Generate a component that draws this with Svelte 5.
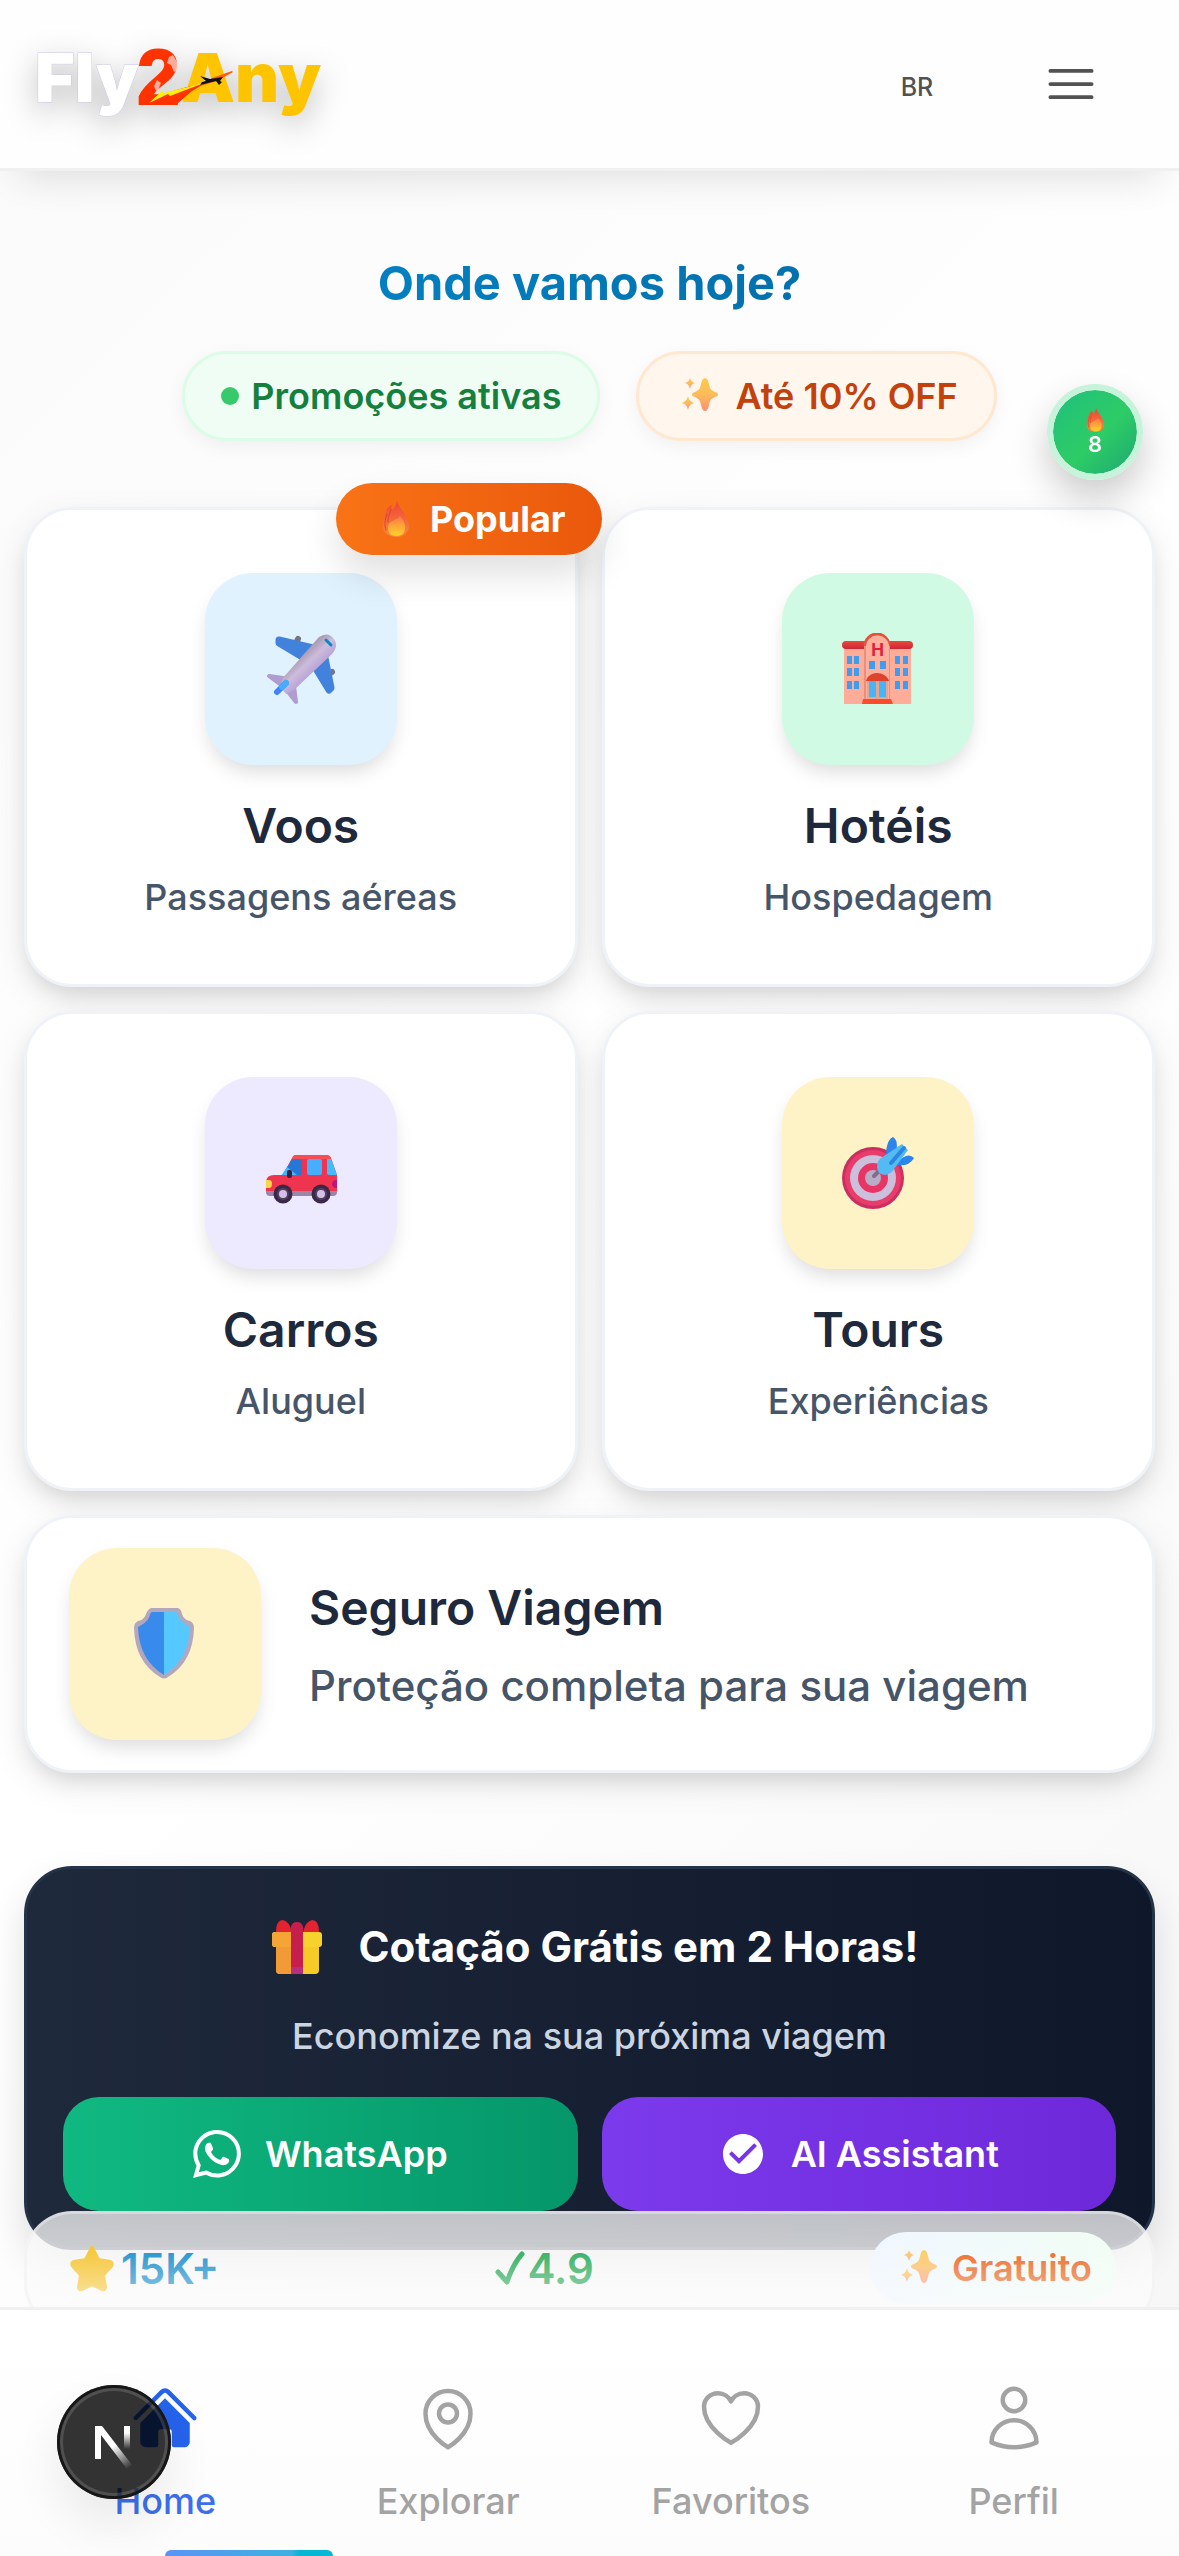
<script>
  const services = [
    { id: 'plane', title: 'Voos', text: 'Passagens aéreas', tone: 'sky', popular: true },
    { id: 'hotel', title: 'Hotéis', text: 'Hospedagem', tone: 'mint' },
    { id: 'car', title: 'Carros', text: 'Aluguel', tone: 'violet' },
    { id: 'target', title: 'Tours', text: 'Experiências', tone: 'amber' }
  ];

  const tabs = [
    { label: 'Home', active: true },
    {
      label: 'Explorar',
      paths: [
        'M15 10.5a3 3 0 11-6 0 3 3 0 016 0z',
        'M19.5 10.5c0 7.142-7.5 11.25-7.5 11.25S4.5 17.642 4.5 10.5a7.5 7.5 0 1115 0z'
      ]
    },
    {
      label: 'Favoritos',
      paths: [
        'M21 8.25c0-2.485-2.099-4.5-4.688-4.5-1.935 0-3.597 1.126-4.312 2.733-.715-1.607-2.377-2.733-4.313-2.733C5.1 3.75 3 5.765 3 8.25c0 7.22 9 12 9 12s9-4.78 9-12z'
      ]
    },
    {
      label: 'Perfil',
      paths: [
        'M15.75 6a3.75 3.75 0 11-7.5 0 3.75 3.75 0 017.5 0z',
        'M4.501 20.118a7.5 7.5 0 0114.998 0A17.933 17.933 0 0112 21.75c-2.676 0-5.216-.584-7.499-1.632z'
      ]
    }
  ];

  const windowRows = [23, 35, 48];
  const windowCols = [5, 12, 53, 61];
</script>

{#snippet fire()}
  <svg class="fire" viewBox="0 0 28 36" aria-hidden="true">
    <path d="M15 0c1 5 5 8 8 14 2 4 4 7 4 12-1 6-6 10-12 10C7 36 1 32 1 25c-1-7 2-10 3-15 1-3 4-6 6-6-1 3-1 4 0 5 3-2 4-5 5-9z" fill="url(#flame)" />
    <path d="M5 13c-2 6-3 11-1 16M9 8c0 4-4 8-3 13" fill="none" stroke="#d9482b" stroke-width="1" stroke-linecap="round" />
    <path d="M18 15c3 4 6 8 5 13-1 5-4 7-9 7-6 0-8-4-8-8 0-5 3-6 6-8 3-1 5-2 6-4z" fill="url(#ember)" />
  </svg>
{/snippet}

{#snippet sparkles()}
  <svg class="sparkles" viewBox="0 0 48 36" aria-hidden="true">
    <g fill="url(#spark)">
      <path d="M30 0c2 0 3 2 4 6 1 5 2 6 6 8 4 1 4 4 0 5-4 2-5 3-6 8-1 4-2 6-4 6s-3-2-4-6c-1-5-2-6-6-8-4-1-4-4 0-5 4-2 5-3 6-8 1-4 2-6 4-6z" />
      <path d="M15 0c1 3 2 4 5 5-3 1-4 2-5 6-1-4-2-5-5-6 3-1 4-2 5-5z" />
      <path d="M13 18c1 4 2 5 6 7-4 1-5 3-6 7-1-4-2-6-6-7 4-2 5-3 6-7z" />
    </g>
  </svg>
{/snippet}

{#snippet art(id)}
  <svg class="art" viewBox="0 0 72 72" aria-hidden="true">
    {#if id === 'plane'}
      <g stroke="#777482" stroke-width="6" stroke-linecap="round"><path d="M32 8l1-2M64 41l3-2" /></g>
      <g fill="#4183dc" stroke="#4183dc" stroke-width="7" stroke-linejoin="round">
        <path d="M14 7l34 8-9 10-25-15z" />
        <path d="M64 57l-14-23 10-9 6 30z" />
      </g>
      <path d="M4 43l14 2 6 9-4 1zM24 54l5-1 2 16-11-14z" fill="#b29bd0" stroke="#b29bd0" stroke-width="4" stroke-linejoin="round" />
      <path d="M17 56V46L54 4q9-6 15 2 5 7-2 15L29 57l-8 4z" fill="url(#fuselage)" />
      <path d="M21 50l-9 9" stroke="#4281ff" stroke-width="6" stroke-linecap="round" />
      <path d="M21 50l-4 4" stroke="#47adfa" stroke-width="6" stroke-linecap="round" />
      <path d="M61 7l5 5" stroke="#078ac6" stroke-width="3" stroke-linecap="round" />
    {:else if id === 'hotel'}
      <rect x="2" y="12" width="67" height="59" fill="#ffad98" />
      <rect x="0" y="8" width="71" height="8" rx="4" fill="url(#roof)" />
      <path d="M22 71V13a13 13 0 0126 0v58z" fill="#e88f80" />
      <path d="M23 13a12 12 0 0124 0" fill="none" stroke="#e4523b" stroke-width="3" />
      <path d="M24 71V14a11 11 0 0123 0v57z" fill="#ffb09d" />
      <text x="35.5" y="23" text-anchor="middle" class="hotel-letter">H</text>
      <g fill="#3f9df0">
        {#each windowRows as y}
          {#each windowCols as x}<rect {x} {y} width="5" height="8" />{/each}
        {/each}
        <rect x="27" y="28" width="6" height="8" /><rect x="38" y="28" width="6" height="8" />
      </g>
      <rect x="25" y="48" width="21" height="19" fill="#e6a68b" />
      <g fill="#45b4fb"><rect x="27" y="48" width="7" height="16" /><rect x="37" y="48" width="7" height="16" /></g>
      <path d="M24 48c1-5 6-8 11-8s11 3 12 8z" fill="#de432b" />
      <path d="M20 71l1-5h28l2 5z" fill="#fb4b2c" />
    {:else if id === 'car'}
      <path d="M1 44q1-6 8-6h9l9-17q2-3 5-3h29q4 0 5 3l6 17v17H1z" fill="#ee344f" />
      <path d="M30 18h31q4 0 5 4H27q1-4 3-4z" fill="#f94b54" />
      <path d="M1 54h71v1q0 4-4 4H5q-4 0-4-4z" fill="#9b86a8" />
      <path d="M17 38l9-14q1-2 3-2h6q2 0 2 2v12q0 2-2 2z" fill="#2777d7" /><path d="M17 38l5-8 10 8z" fill="#42b9fb" />
      <rect x="42" y="22" width="15" height="16" rx="2" fill="#46adff" />
      <path d="M62 22h4l6 16h-8q-2 0-2-2z" fill="#43bbff" />
      <rect x="22" y="33" width="5" height="8" rx="2" fill="#382348" />
      <path d="M1 43h3q3 0 3 4t-3 4H1z" fill="#f9d647" />
      <path d="M72 43q-5 0-5 4t5 4z" fill="#bd1480" />
      {#each [18, 56] as x}
        <circle cx={x} cy="57" r="9.5" fill="#3b2849" /><circle cx={x} cy="57" r="6" fill="#53425e" /><circle cx={x} cy="57" r="4" fill="#d6bfea" />
      {/each}
    {:else if id === 'target'}
      <circle cx="31" cy="41" r="31" fill="#c92f61" />
      <circle cx="31" cy="41" r="28" fill="#e93c6a" />
      <circle cx="31" cy="41" r="23" fill="#cbbfdc" />
      <circle cx="31" cy="41" r="15" fill="#e93566" />
      <circle cx="31" cy="41" r="8" fill="#b9acc5" />
      <path d="M32 39l7-7" stroke="#806d8c" stroke-width="4" stroke-linecap="round" />
      <path d="M44 16q1-14 7-16 4 2 4 10l-4 10zM54 26q12-12 18-5-5 9-18 7z" fill="#2c85ed" />
      <path d="M35 30q0-6 4-9L60 7l6 6-14 19q-3 5-9 6-8-1-8-8z" fill="#53baf2" />
      <path d="M49 26L62 11" stroke="#2a87e0" stroke-width="4" stroke-linecap="round" />
    {:else}
      <path d="M22 0h27q3 1 4 6 2 6 8 7 4 2 4 7-1 34-26 49-4 3-8 0Q6 54 5 20q0-5 4-7 6-1 8-7 2-5 5-6z" fill="#b3a7bd" />
      <path d="M23 4h12v63Q10 52 9 19q2-1 5-3 5-3 7-9 0-2 2-3z" fill="#388aed" />
      <path d="M47 4H35v63q25-15 26-48-2-1-5-3-5-3-7-9 0-2-2-3z" fill="#55c9ff" />
    {/if}
  </svg>
{/snippet}

<svg class="paint" width="0" height="0" aria-hidden="true">
  <defs>
    <linearGradient id="flame" x1="0" y1="0" x2="0" y2="1"><stop offset="0" stop-color="#ef4338" /><stop offset="1" stop-color="#fb8a3c" /></linearGradient>
    <linearGradient id="ember" x1="0" y1="0" x2="0" y2="1"><stop offset="0" stop-color="#ff7a45" /><stop offset="1" stop-color="#ffd22b" /></linearGradient>
    <linearGradient id="spark" x1="0" y1="0" x2="0" y2="1"><stop offset="0" stop-color="#fdc94b" /><stop offset="0.5" stop-color="#fcbc5a" /><stop offset="1" stop-color="#fa8f72" /></linearGradient>
    <linearGradient id="fuselage" gradientUnits="userSpaceOnUse" x1="35" y1="24" x2="48" y2="38"><stop offset="0" stop-color="#ac9cb4" /><stop offset="0.5" stop-color="#cdbcdc" /><stop offset="1" stop-color="#bba6d6" /></linearGradient>
    <linearGradient id="roof" x1="0" y1="0" x2="0" y2="1"><stop offset="0" stop-color="#e84a3a" /><stop offset="1" stop-color="#cf2436" /></linearGradient>
    <linearGradient id="stem" x1="0" y1="0" x2="0" y2="1"><stop offset="0.3" stop-color="#fff" /><stop offset="1" stop-color="#fff" stop-opacity="0" /></linearGradient>
    <linearGradient id="slash" gradientUnits="userSpaceOnUse" x1="58" y1="60" x2="74" y2="82"><stop offset="0" stop-color="#fff" /><stop offset="1" stop-color="#fff" stop-opacity="0" /></linearGradient>
  </defs>
</svg>

<div class="app">
  <header class="topbar">
    <a class="brand" href="#home" aria-label="Fly2Any">
      <svg viewBox="0 0 300 90">
        <g class="wordmark">
          <text x="5" y="63" fill="#fff" stroke="#c9c9e6" stroke-width="1" paint-order="stroke">Fly</text>
          <text x="151" y="63" fill="#ffc400">Any</text>
        </g>
        <text class="two" x="107" y="65" fill="#ff3300" stroke="#ff3300" stroke-width="2">2</text>
        <path d="M139 18l4-2 4 7 1 7-4 3-3-7-4-2zM127 41l4 3-4 10-3-7z" fill="#ffc9c2" opacity="0.8" />
        <path d="M112 65l20-10 25-7 17-3-12 7-15 13z" fill="#ff3300" />
        <path d="M119 64l13-12 2 2 40-10-34 13-2-2z" fill="#fff200" />
        <path d="M170 47l12-8 20-7 1 1-16 9z" fill="#ff5a00" />
        <path d="M170 37l10 3 13-2-3 4 2 1-3 3-3-4-16 4 2-3 4-1z" fill="#111" />
      </svg>
    </a>
    <div class="actions">
      <button class="lang">BR</button>
      <button class="menu" aria-label="Menu">
        <svg viewBox="0 0 24 24"><path d="M3.75 6.75h16.5M3.75 12h16.5m-16.5 5.25h16.5" /></svg>
      </button>
    </div>
  </header>

  <main>
    <h1>Onde vamos hoje?</h1>
    <div class="pills">
      <span class="pill green"><i class="dot"></i>Promoções ativas</span>
      <span class="pill orange">{@render sparkles()}Até 10% OFF</span>
    </div>

    <section class="services">
      {#each services as s}
        <button class="card">
          {#if s.popular}<span class="popular">{@render fire()}Popular</span>{/if}
          <span class="tile {s.tone}">{@render art(s.id)}</span>
          <span class="title">{s.title}</span>
          <span class="text">{s.text}</span>
        </button>
      {/each}
      <button class="card wide">
        <span class="tile amber">{@render art('shield')}</span>
        <span class="copy">
          <span class="title">Seguro Viagem</span>
          <span class="text">Proteção completa para sua viagem</span>
        </span>
      </button>
    </section>

    <section class="quote">
      <h2>
        <svg class="gift" viewBox="0 0 70 60" aria-hidden="true">
          <path d="M16 29h43v24q0 4-4 4H20q-4 0-4-4z" fill="#f6ca27" /><path d="M16 29h15v28H20q-4 0-4-4z" fill="#f19b36" />
          <rect x="12" y="15" width="50" height="15" rx="3" fill="#f7d12e" /><path d="M15 15h16v15H15q-3 0-3-3v-9q0-3 3-3z" fill="#f5a535" />
          <path d="M16 15q0-12 7-12 6 1 9 12zM59 15q0-12-7-12-6 1-9 12z" fill="#e3232f" />
          <path d="M31 57V10q1-5 6-5t6 5v47z" fill="#c71f4c" /><path d="M31 50h12v7H31z" fill="#b82f7f" />
        </svg>
        Cotação Grátis em 2 Horas!
      </h2>
      <p>Economize na sua próxima viagem</p>
      <div class="ctas">
        <button class="cta whats">
          <svg viewBox="0 0 24 24" aria-hidden="true"><path d="M17.472 14.382c-.297-.149-1.758-.867-2.03-.967-.273-.099-.471-.148-.67.15-.197.297-.767.966-.94 1.164-.173.199-.347.223-.644.075-.297-.15-1.255-.463-2.39-1.475-.883-.788-1.48-1.761-1.653-2.059-.173-.297-.018-.458.13-.606.134-.133.298-.347.446-.52.149-.174.198-.298.298-.497.099-.198.05-.371-.025-.52-.075-.149-.669-1.612-.916-2.207-.242-.579-.487-.5-.669-.51-.173-.008-.371-.01-.57-.01-.198 0-.52.074-.792.372-.272.297-1.04 1.016-1.04 2.479 0 1.462 1.065 2.875 1.213 3.074.149.198 2.096 3.2 5.077 4.487.709.306 1.262.489 1.694.625.712.227 1.36.195 1.871.118.571-.085 1.758-.719 2.006-1.413.248-.694.248-1.289.173-1.413-.074-.124-.272-.198-.57-.347m-5.421 7.403h-.004a9.87 9.87 0 01-5.031-1.378l-.361-.214-3.741.982.998-3.648-.235-.374a9.86 9.86 0 01-1.51-5.26c.001-5.45 4.436-9.884 9.888-9.884 2.64 0 5.122 1.03 6.988 2.898a9.825 9.825 0 012.893 6.994c-.003 5.45-4.437 9.884-9.885 9.884m8.413-18.297A11.815 11.815 0 0012.05 0C5.495 0 .16 5.335.157 11.892c0 2.096.547 4.142 1.588 5.945L.057 24l6.305-1.654a11.882 11.882 0 005.683 1.448h.005c6.554 0 11.89-5.335 11.893-11.893a11.821 11.821 0 00-3.48-8.413z" /></svg>
          WhatsApp
        </button>
        <button class="cta ai">
          <svg viewBox="0 0 24 24" aria-hidden="true"><path d="M12 2C6.48 2 2 6.48 2 12s4.48 10 10 10 10-4.48 10-10S17.52 2 12 2zm-2 15l-5-5 1.41-1.41L10 14.17l7.59-7.59L19 8l-9 9z" /></svg>
          AI Assistant
        </button>
      </div>
    </section>

    <section class="stats">
      <span class="stat blue">
        <svg class="star" viewBox="0 0 58 48" aria-hidden="true"><path d="M29 4l6 12 12 2q3 1 1 4l-8 9 2 12q0 3-3 2l-10-5-10 5q-3 1-3-2l2-12-8-9q-2-3 1-4l12-2z" fill="#f5bf1c" stroke="#f5bf1c" stroke-width="4" stroke-linejoin="round" /></svg>15K+
      </span>
      <span class="stat lime">
        <svg class="tick" viewBox="0 0 32 48" aria-hidden="true"><path d="M3 28l9 10Q18 20 27 10" /></svg>4.9
      </span>
      <span class="free">{@render sparkles()}Gratuito</span>
    </section>
  </main>

  <nav class="tabs">
    {#each tabs as t}
      <a href="#{t.label.toLowerCase()}" class:active={t.active}>
        {#if t.active}
          <svg class="solid" viewBox="0 0 24 24" aria-hidden="true"><path d="M11.47 3.84a.75.75 0 011.06 0l8.69 8.69a.75.75 0 101.06-1.06l-8.689-8.69a2.25 2.25 0 00-3.182 0l-8.69 8.69a.75.75 0 001.061 1.06l8.69-8.69z" /><path d="M12 5.432l8.159 8.159c.03.03.06.058.091.086v6.198c0 1.035-.84 1.875-1.875 1.875H15a.75.75 0 01-.75-.75v-4.5a.75.75 0 00-.75-.75h-3a.75.75 0 00-.75.75V21a.75.75 0 01-.75.75H5.625a1.875 1.875 0 01-1.875-1.875v-6.198a2.29 2.29 0 00.091-.086L12 5.43z" /></svg>
        {:else}
          <svg viewBox="0 0 24 24" aria-hidden="true">{#each t.paths as d}<path {d} />{/each}</svg>
        {/if}
        {t.label}
      </a>
    {/each}
  </nav>

  <button class="deals" aria-label="8 ofertas">{@render fire()}<span>8</span></button>
  <button class="devtools" aria-label="Next.js">
    <svg viewBox="0 0 114 114">
      <rect x="38" y="41" width="6" height="33" fill="#fff" />
      <path d="M38 41h7l30 39-5 4-26-34z" fill="url(#slash)" />
      <rect x="67" y="41" width="6" height="23" fill="url(#stem)" />
    </svg>
  </button>
</div>

<style>
  :global(body) {
    margin: 0;
  }

  .app,
  button {
    font-family: Inter, 'Liberation Sans', sans-serif;
  }

  .app {
    min-height: 100vh;
    display: flex;
    flex-direction: column;
    background: linear-gradient(135deg, #fafafa, #ffffff 50%, #f5f5f5);
    color: #1e293b;
  }

  button {
    margin: 0;
    padding: 0;
    border: 0;
    background: none;
    color: inherit;
    cursor: pointer;
  }

  a {
    text-decoration: none;
  }

  svg {
    display: block;
    flex: none;
  }

  .paint {
    position: absolute;
  }

  .topbar {
    position: sticky;
    top: 0;
    z-index: 5;
    box-sizing: border-box;
    height: 171px;
    padding: 0 60px 0 30px;
    display: flex;
    align-items: center;
    justify-content: space-between;
    background: #fefefe;
    border-bottom: 3px solid #f0f0f0;
    box-shadow: 0 24px 36px -18px rgba(0, 0, 0, 0.12);
  }

  .brand svg {
    width: 300px;
    height: 90px;
    overflow: visible;
    filter: drop-shadow(0 10px 15px rgba(0, 0, 0, 0.25));
  }

  .wordmark {
    font: 900 68px Inter, sans-serif;
  }

  .two {
    font: 700 77px 'Liberation Sans', sans-serif;
  }

  .actions {
    display: flex;
    align-items: center;
    gap: 58px;
    color: #525252;
  }

  .lang,
  .menu {
    width: 96px;
    height: 96px;
    display: grid;
    place-items: center;
  }

  .lang {
    padding-top: 6px;
    font-size: 25px;
    font-weight: 500;
  }

  .menu svg {
    width: 60px;
    height: 60px;
    fill: none;
    stroke: currentColor;
    stroke-width: 1.5;
    stroke-linecap: round;
  }

  main {
    display: flex;
    flex-direction: column;
    padding: 82px 24px 0;
  }

  h1 {
    margin: 0;
    font-size: 47px;
    line-height: 60px;
    font-weight: 700;
    text-align: center;
    color: transparent;
    background: linear-gradient(90deg, #0284c7 20%, #0369a1 90%);
    background-clip: text;
  }

  .pills {
    display: flex;
    justify-content: center;
    gap: 36px;
    margin-top: 38px;
  }

  .pill {
    box-sizing: border-box;
    height: 90px;
    padding: 0 36px;
    display: flex;
    align-items: center;
    gap: 12px;
    border: 3px solid;
    border-radius: 45px;
    font-size: 36px;
    font-weight: 600;
    box-shadow: 0 6px 18px rgba(0, 0, 0, 0.05);
  }

  .pill.green {
    background: #f0fdf4;
    border-color: #dcfce7;
    color: #15803d;
  }

  .pill.orange {
    background: #fff7ed;
    border-color: #ffe8cf;
    color: #c2410c;
  }

  .dot {
    width: 18px;
    height: 18px;
    border-radius: 50%;
    background: #37ca6b;
  }

  .sparkles {
    width: 48px;
    height: 36px;
  }

  .fire {
    width: 28px;
    height: 36px;
  }

  .services {
    display: grid;
    grid-template-columns: 1fr 1fr;
    gap: 24px;
    margin-top: 66px;
  }

  .card {
    position: relative;
    display: flex;
    flex-direction: column;
    align-items: center;
    padding: 63px 24px 60px;
    background: #fff;
    border: 3px solid #eff3f8;
    border-radius: 48px;
    box-shadow:
      0 12px 24px -8px rgba(0, 0, 0, 0.14),
      0 12px 36px rgba(0, 0, 0, 0.08);
  }

  .tile {
    width: 192px;
    height: 192px;
    display: grid;
    place-items: center;
    border-radius: 48px;
    box-shadow: 0 10px 20px -4px rgba(0, 0, 0, 0.15);
  }

  .tile.sky {
    background: #e0f2fe;
  }

  .tile.mint {
    background: #d1fae5;
  }

  .tile.violet {
    background: #ede9fe;
  }

  .tile.amber {
    background: #fef3c7;
  }

  .art {
    width: 72px;
    height: 72px;
    fill: none;
  }

  .hotel-letter {
    font: 700 17px Inter, sans-serif;
    fill: #e3203b;
  }

  .title {
    margin-top: 31px;
    font-size: 48px;
    line-height: 60px;
    font-weight: 600;
    color: #1e293b;
  }

  .text {
    margin-top: 14px;
    font-size: 36px;
    line-height: 54px;
    font-weight: 500;
    color: #475569;
  }

  .popular {
    position: absolute;
    top: -27px;
    right: -27px;
    height: 72px;
    padding: 0 36px 0 46px;
    display: flex;
    align-items: center;
    gap: 20px;
    border-radius: 36px;
    background: linear-gradient(90deg, #f97316, #ea580c);
    color: #fff;
    font-size: 36px;
    font-weight: 700;
    box-shadow: 0 20px 36px rgba(0, 0, 0, 0.12);
    z-index: 1;
  }

  .card.wide {
    grid-column: 1 / -1;
    flex-direction: row;
    gap: 48px;
    padding: 30px 42px;
    text-align: left;
  }

  .copy {
    display: flex;
    flex-direction: column;
    gap: 24px;
  }

  .wide .title,
  .wide .text {
    margin: 0;
  }

  .wide .text {
    font-size: 42px;
    line-height: 48px;
  }

  .quote {
    margin-top: 93px;
    padding: 48px 36px 36px;
    border: 3px solid #253349;
    border-radius: 48px;
    background: linear-gradient(90deg, #1e293b, #0f172a);
    box-shadow: 0 18px 36px rgba(0, 0, 0, 0.12);
    color: #fff;
    text-align: center;
  }

  h2 {
    margin: 0;
    display: flex;
    align-items: center;
    justify-content: center;
    gap: 28px;
    font-size: 42px;
    line-height: 60px;
    font-weight: 700;
  }

  .gift {
    width: 70px;
    height: 60px;
  }

  .quote p {
    margin: 32px 0 34px;
    font-size: 36px;
    line-height: 54px;
    font-weight: 500;
    color: #cbd5e1;
  }

  .ctas {
    display: grid;
    grid-template-columns: 1fr 1fr;
    gap: 24px;
  }

  .cta {
    height: 114px;
    display: flex;
    align-items: center;
    justify-content: center;
    gap: 24px;
    border-radius: 36px;
    font-size: 36px;
    font-weight: 600;
  }

  .cta svg {
    width: 48px;
    height: 48px;
    fill: #fff;
  }

  .whats {
    background: linear-gradient(90deg, #10b981, #059669);
  }

  .ai {
    background: linear-gradient(90deg, #7c3aed, #6d28d9);
  }

  .stats {
    position: relative;
    box-sizing: border-box;
    height: 120px;
    margin-top: -39px;
    padding: 18px 36px 0;
    display: flex;
    align-items: flex-start;
    justify-content: space-between;
    border: 3px solid rgba(240, 240, 240, 0.5);
    border-radius: 48px;
    background: rgba(250, 250, 250, 0.75);
  }

  .stats::after {
    content: '';
    position: absolute;
    inset: 0;
    border-radius: 45px;
    background: linear-gradient(rgba(252, 252, 252, 0), rgba(252, 252, 252, 0.15) 36px, rgba(252, 252, 252, 0.65) 93px);
  }

  .stat {
    height: 72px;
    display: flex;
    align-items: center;
    font-size: 42px;
    font-weight: 600;
  }

  .stat.blue {
    color: #0284c7;
  }

  .stat.lime {
    color: #16a34a;
  }

  .star {
    width: 58px;
    height: 48px;
  }

  .tick {
    width: 32px;
    height: 48px;
    fill: none;
    stroke: currentColor;
    stroke-width: 5;
    stroke-linecap: round;
    stroke-linejoin: round;
  }

  .free {
    height: 72px;
    padding: 0 24px;
    display: flex;
    align-items: center;
    gap: 10px;
    border-radius: 36px;
    background: linear-gradient(90deg, #eff6ff, #f0fdf4);
    color: #ea580c;
    font-size: 36px;
    font-weight: 600;
  }

  .tabs {
    position: sticky;
    bottom: 0;
    z-index: 4;
    box-sizing: border-box;
    height: 249px;
    margin-top: -24px;
    padding: 0 24px;
    display: grid;
    grid-template-columns: repeat(4, 1fr);
    background: linear-gradient(#ffffff, #fcfcfc);
    border-top: 3px solid #f0f0f0;
    overflow: hidden;
  }

  .tabs a {
    position: relative;
    padding-top: 72px;
    display: flex;
    flex-direction: column;
    align-items: center;
    gap: 20px;
    color: #a3a3a3;
    font-size: 36px;
    line-height: 54px;
    font-weight: 500;
  }

  .tabs svg {
    width: 72px;
    height: 72px;
    fill: none;
    stroke: currentColor;
    stroke-width: 1.5;
    stroke-linecap: round;
    stroke-linejoin: round;
  }

  .tabs svg.solid {
    fill: #2563eb;
    stroke: none;
  }

  .tabs a.active {
    color: #3b6fec;
  }

  .tabs a.active::after {
    content: '';
    position: absolute;
    left: 50%;
    bottom: 0;
    width: 168px;
    height: 6px;
    border-radius: 6px 6px 0 0;
    background: linear-gradient(90deg, #5b93f5, #3fb0e2 75%, #06b6d4 80%);
  }

  .deals {
    position: fixed;
    top: 384px;
    right: 36px;
    z-index: 6;
    box-sizing: border-box;
    width: 96px;
    height: 96px;
    display: flex;
    flex-direction: column;
    align-items: center;
    justify-content: center;
    border: 6px solid #c6f3d9;
    border-radius: 50%;
    background: linear-gradient(135deg, #1fbf7e, #2ecc66 55%, #1ca873) padding-box;
    box-shadow: 0 18px 36px rgba(0, 0, 0, 0.2);
    color: #fff;
    font-size: 22px;
    line-height: 24px;
    font-weight: 600;
  }

  .deals .fire {
    width: 19px;
    height: 24px;
  }

  .devtools {
    position: fixed;
    left: 57px;
    bottom: 57px;
    z-index: 6;
    width: 114px;
    height: 114px;
    border-radius: 50%;
    background: rgba(0, 0, 0, 0.8);
    box-shadow:
      inset 0 0 0 3px #171717,
      inset 0 0 0 6px rgba(255, 255, 255, 0.14),
      0 24px 48px rgba(0, 0, 0, 0.08);
  }
</style>
